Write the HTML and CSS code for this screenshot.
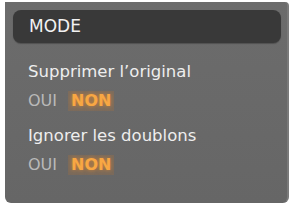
FILE: index.html
```html
<!DOCTYPE html>
<html lang="fr">
  <head>
    <meta charset="UTF-8" />
    <title>Mode</title>
    <link rel="stylesheet" href="styles.css">
  </head>
  <body>
    <div class="panel">
      <div class="panel-header">MODE</div>

      <div class="option">
        <div class="option-label">Supprimer l’original</div>
        <div class="toggle">
          <span class="toggle-item">OUI</span>
          <span class="toggle-item active">NON</span>
        </div>
      </div>

      <div class="option">
        <div class="option-label">Ignorer les doublons</div>
        <div class="toggle">
          <span class="toggle-item">OUI</span>
          <span class="toggle-item active">NON</span>
        </div>
      </div>
    </div>
  </body>
</html>
```

FILE: styles.css
```css
body {
  font-family: "DejaVu Sans", sans-serif;
  background-color: #ffffff;
  margin: 0;
  padding: 2px 4px 0 5px;
}

.panel {
  background: linear-gradient(#6c6c6c, #666666);
  border-right: 2px solid #7a7a7a;
  border-radius: 0 4px 6px 6px;
  height: 201px;
  padding: 8px 6px 0 8px;
  box-sizing: border-box;
}

.panel-header {
  background-color: #393939;
  color: #f2f2f2;
  font-size: 17px;
  height: 33px;
  line-height: 33px;
  padding-left: 16px;
  margin-bottom: 4px;
  border-radius: 8px;
  box-shadow: 0 1px 1px rgba(0, 0, 0, 0.25);
}

.option {
  padding: 15px 0 0 15px;
}

.option-label {
  color: #eeeeee;
  font-size: 16.5px;
  line-height: 20px;
}

.toggle {
  display: flex;
  gap: 11px;
  margin-top: 9px;
  font-size: 16px;
  line-height: 20px;
}

.toggle-item {
  color: #b9b9b9;
}

.toggle-item.active {
  color: #f8a743;
  font-weight: bold;
  padding: 0 3px;
  background-color: rgba(190, 120, 50, 0.22);
  text-shadow: 0 0 4px rgba(255, 150, 40, 0.7);
}
```
